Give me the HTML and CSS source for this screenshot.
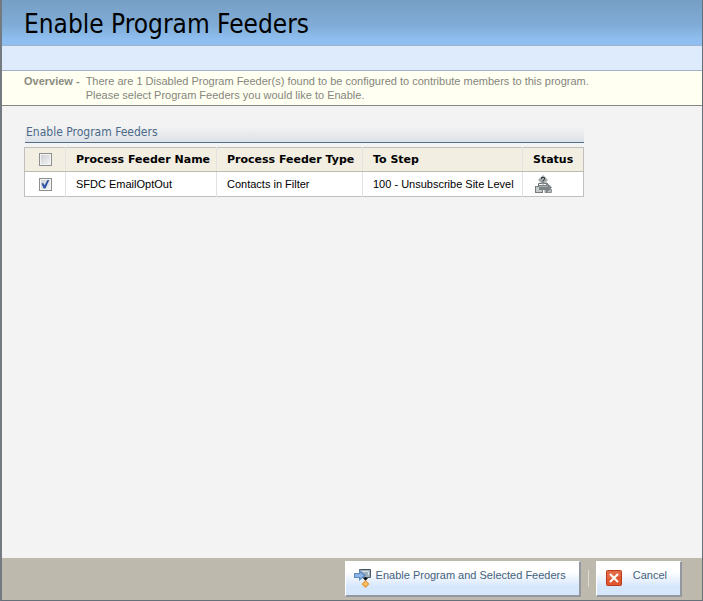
FILE: index.html
```html
<!doctype html>
<html lang="en">
  <head>
    <meta charset="UTF-8" />
    <meta name="viewport" content="width=device-width, initial-scale=1.0" />
    <title>Enable Program Feeders</title>
    <link rel="stylesheet" href="styles.css">
  </head>
  <body>
    <header>
      <h1>Enable Program Feeders</h1>
      <div class="toolbar"></div>
      <div class="overview">
        <strong>Overview -</strong>
        <p>
          There are 1 Disabled Program Feeder(s) found to be configured to contribute members to this program.<br>
          Please select Program Feeders you would like to Enable.
        </p>
      </div>
    </header>

    <main>
      <h2>Enable Program Feeders</h2>
      <table>
        <colgroup>
          <col class="col-check">
          <col class="col-name">
          <col class="col-type">
          <col class="col-step">
          <col class="col-status">
        </colgroup>
        <thead>
          <tr>
            <th class="check"><input type="checkbox" id="selectAll" aria-label="Select all feeders"></th>
            <th>Process Feeder Name</th>
            <th>Process Feeder Type</th>
            <th>To Step</th>
            <th>Status</th>
          </tr>
        </thead>
        <tbody>
          <tr>
            <td class="check"><input type="checkbox" id="feeder1" checked aria-labelledby="feederName1"></td>
            <td id="feederName1">SFDC EmailOptOut</td>
            <td>Contacts in Filter</td>
            <td>100 - Unsubscribe Site Level</td>
            <td>
              <svg class="status-icon" width="20" height="19" viewBox="0 0 20 19" role="img" aria-label="Disabled">
                <path d="M5.500 12V8.500H14.500V11" fill="none" stroke="#666b6d" />
                <path d="M10 0L15 5L10 10L5 5Z" fill="#a4a9aa" />
                <path d="M8.500 4V2.500H11.500V4.500L10 5.500V6.500M10 7.500V8.500" fill="none" stroke="#33373a" />
                <rect x="2.500" y="11.500" width="7" height="6" fill="#c6cacb" stroke="#777a7c" />
                <path d="M12 14.500H18.500V17.500H12Z" fill="#b9bdbe" stroke="#8b8f91" />
                <path d="M6 10H13V7L19 12.500L13 18V15H6Z" fill="#7b8385" />
                <path d="M6 11.500H15" stroke="#a5acae" />
              </svg>
            </td>
          </tr>
        </tbody>
      </table>
    </main>

    <footer>
      <button type="button" class="enable">
        <svg width="18" height="20" viewBox="0 0 18 20" aria-hidden="true">
          <path d="M5.500 1.500H16.500V9.500H5.500Z" fill="#9eb0bc" stroke="#4a5965" />
          <path d="M8 3.500H14.500V7" fill="none" stroke="#d6e0e6" />
          <path d="M0 5H5V2L12 7.500L5 13V10H0Z" fill="#5f88bd" />
          <path d="M1 6H6V4.500L10 7.500L6 10.500V9H1Z" fill="#8bb5e6" />
          <path d="M11.500 9V12" stroke="#111" />
          <path d="M9 10H14L11.500 13Z" fill="#111" />
          <path d="M11.500 12L15.500 16L11.500 20L7.500 16Z" fill="#e3973b" />
          <path d="M11.500 13.500L14 16L11.500 18L9 16Z" fill="#fbc063" />
        </svg>
        <span>Enable Program and Selected Feeders</span>
      </button>
      <span class="divider"></span>
      <button type="button" class="cancel">
        <svg width="16" height="16" viewBox="0 0 16 16" aria-hidden="true">
          <rect x="0.500" y="0.500" width="15" height="15" rx="1" fill="#e0562f" stroke="#b93a1c" />
          <path d="M1 1H15V6L1 9Z" fill="#e46a45" />
          <path d="M4 4L12 12M12 4L4 12" stroke="#fff" stroke-width="2" />
        </svg>
        <span>Cancel</span>
      </button>
    </footer>
  </body>
</html>
```

FILE: styles.css
```css
* {
  box-sizing: border-box;
}
body {
  display: flex;
  flex-direction: column;
  min-height: 100vh;
  margin: 0;
  border: 1px solid #667078;
  border-top: none;
  border-left: 2px solid #747b80;
  background-color: #f3f3f3;
  font-family: "Liberation Sans", Arial, sans-serif;
  font-size: 11px;
}
h1 {
  height: 46px;
  margin: 0;
  padding-left: 22px;
  border-bottom: 1px solid #9fb4cd;
  background: linear-gradient(#779fc5, #7facd6 55%, #8fbff0 88%);
  font-family: "DejaVu Sans Condensed", Tahoma, sans-serif;
  font-size: 26px;
  font-weight: normal;
  line-height: 48px;
}
.toolbar {
  height: 25px;
  border-bottom: 1px solid #a3b1ca;
  background-color: #deebfc;
}
.overview {
  display: flex;
  gap: 6px;
  padding: 3px 22px;
  border-bottom: 1px solid #85867f;
  background-color: #fffff2;
  color: #85867c;
  line-height: 14px;
}
.overview strong {
  color: #8b8c80;
}
.overview p {
  margin: 0;
}
main {
  flex-grow: 1;
  width: 582px;
  max-width: 100%;
  padding: 16px 0 16px 22px;
}
h2 {
  height: 21px;
  margin: 0 0 4px 1px;
  padding-left: 1px;
  border-bottom: 1px solid #536f8c;
  background: linear-gradient(#f3f3f3 20%, #dde2e8);
  color: #4b6a88;
  font-family: "DejaVu Sans Condensed", Tahoma, sans-serif;
  font-size: 12px;
  font-weight: normal;
  line-height: 20px;
}
table {
  width: 100%;
  border-collapse: collapse;
  border: 1px solid #c0c0c0;
  background-color: #fff;
  table-layout: fixed;
}
.col-check {
  width: 41px;
}
.col-name {
  width: 151px;
}
.col-type {
  width: 146px;
}
.col-step {
  width: 160px;
}
th,
td {
  height: 24px;
  padding: 0 0 0 10px;
  border-right: 1px solid #e2e2e2;
  text-align: left;
  white-space: nowrap;
}
td {
  height: 25px;
}
th {
  border-bottom: 1px solid #bdbbae;
  background-color: #f2efe2;
  color: #000;
  font-family: "DejaVu Sans", Verdana, sans-serif;
  font-size: 11px;
}
th:last-child,
td:last-child {
  border-right-color: #c0c0c0;
}
.check {
  padding: 0;
  text-align: center;
}
input[type="checkbox"] {
  appearance: none;
  display: grid;
  place-content: center;
  width: 13px;
  height: 13px;
  margin: 0 auto;
  border: 1px solid #8e8f8f;
  background: linear-gradient(135deg, #c9ccd0, #f6f6f6);
  box-shadow: inset 0 0 0 1px #f4f4f4;
}
input[type="checkbox"]:checked::before {
  content: "";
  width: 9px;
  height: 9px;
  background-color: #3057a5;
  clip-path: polygon(10% 45%, 30% 40%, 45% 65%, 80% 0, 100% 0, 55% 100%, 35% 100%);
}
.status-icon {
  display: block;
}
footer {
  display: flex;
  align-items: flex-start;
  justify-content: flex-end;
  padding: 3px 20px 3px;
  background-color: #bdb9ad;
}
button {
  display: flex;
  height: 36px;
  padding: 0 13px 0 8px;
  border: 1px solid #fff;
  border-right: 2px solid #9297a0;
  border-bottom: 2px solid #9297a0;
  background: linear-gradient(#fff 30%, #d6e6fb 75%);
  color: #47627b;
  font-family: inherit;
  font-size: 11px;
  line-height: 27px;
  cursor: pointer;
}
.enable svg {
  margin: 6px 4px 0 0;
}
.cancel {
  padding-left: 9px;
}
.cancel svg {
  margin: 8px 11px 0 0;
}
.divider {
  width: 1px;
  height: 17px;
  margin: 9px 7px 0;
  background-color: #dedcd5;
}
```
